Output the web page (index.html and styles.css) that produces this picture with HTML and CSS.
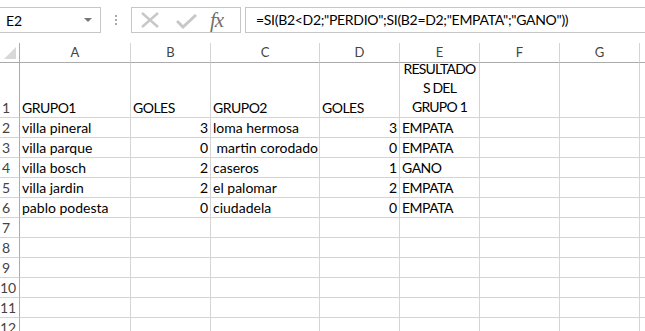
FILE: index.html
```html
<!DOCTYPE html>
<html>
<head>
    <meta charset="UTF-8">
    <title>Libro1</title>
    <link rel="stylesheet" href="styles.css">
</head>
<body>
    <div class="toolbar">
        <div class="namebox">
            <span>E2</span>
            <span class="arrow"></span>
        </div>
        <div class="grip"><i></i><i></i><i></i></div>
        <div class="buttons">
            <svg class="btn-x" width="18" height="16" viewBox="0 0 18 16"><path d="M1 1 L17 15 M17 1 L1 15" stroke="#c8c8c8" stroke-width="2.4" fill="none"/></svg>
            <svg class="btn-ok" width="21" height="15" viewBox="0 0 21 15"><path d="M1 7 L7 13 L20 1" stroke="#c8c8c8" stroke-width="3" fill="none"/></svg>
            <span class="fx">fx</span>
        </div>
        <div class="formula">=SI(B2&lt;D2;"PERDIO";SI(B2=D2;"EMPATA";"GANO"))</div>
    </div>
    <div class="sheet">
        <div class="ch corner"><span class="tri"></span></div>
        <div class="ch">A</div>
        <div class="ch">B</div>
        <div class="ch">C</div>
        <div class="ch">D</div>
        <div class="ch">E</div>
        <div class="ch">F</div>
        <div class="ch">G</div>
        <div class="ch last"></div>

        <div class="rh tall">1</div>
        <div class="c tall caps">GRUPO1</div>
        <div class="c tall caps">GOLES</div>
        <div class="c tall caps">GRUPO2</div>
        <div class="c tall caps">GOLES</div>
        <div class="c tall caps wrap">RESULTADO<br>S DEL<br>GRUPO 1</div>
        <div class="c tall"></div>
        <div class="c tall"></div>
        <div class="c tall last"></div>

        <div class="rh">2</div>
        <div class="c">villa pineral</div>
        <div class="c num">3</div>
        <div class="c">loma hermosa</div>
        <div class="c num">3</div>
        <div class="c caps">EMPATA</div>
        <div class="c"></div>
        <div class="c"></div>
        <div class="c last"></div>

        <div class="rh">3</div>
        <div class="c">villa parque</div>
        <div class="c num">0</div>
        <div class="c">&nbsp;martin corodado</div>
        <div class="c num">0</div>
        <div class="c caps">EMPATA</div>
        <div class="c"></div>
        <div class="c"></div>
        <div class="c last"></div>

        <div class="rh">4</div>
        <div class="c">villa bosch</div>
        <div class="c num">2</div>
        <div class="c">caseros</div>
        <div class="c num">1</div>
        <div class="c caps">GANO</div>
        <div class="c"></div>
        <div class="c"></div>
        <div class="c last"></div>

        <div class="rh">5</div>
        <div class="c">villa jardin</div>
        <div class="c num">2</div>
        <div class="c">el palomar</div>
        <div class="c num">2</div>
        <div class="c caps">EMPATA</div>
        <div class="c"></div>
        <div class="c"></div>
        <div class="c last"></div>

        <div class="rh">6</div>
        <div class="c">pablo podesta</div>
        <div class="c num">0</div>
        <div class="c">ciudadela</div>
        <div class="c num">0</div>
        <div class="c caps">EMPATA</div>
        <div class="c"></div>
        <div class="c"></div>
        <div class="c last"></div>

        <div class="rh">7</div><div class="c"></div><div class="c"></div><div class="c"></div><div class="c"></div><div class="c"></div><div class="c"></div><div class="c"></div><div class="c last"></div>
        <div class="rh">8</div><div class="c"></div><div class="c"></div><div class="c"></div><div class="c"></div><div class="c"></div><div class="c"></div><div class="c"></div><div class="c last"></div>
        <div class="rh">9</div><div class="c"></div><div class="c"></div><div class="c"></div><div class="c"></div><div class="c"></div><div class="c"></div><div class="c"></div><div class="c last"></div>
        <div class="rh">10</div><div class="c"></div><div class="c"></div><div class="c"></div><div class="c"></div><div class="c"></div><div class="c"></div><div class="c"></div><div class="c last"></div>
        <div class="rh">11</div><div class="c"></div><div class="c"></div><div class="c"></div><div class="c"></div><div class="c"></div><div class="c"></div><div class="c"></div><div class="c last"></div>
        <div class="rh">12</div><div class="c"></div><div class="c"></div><div class="c"></div><div class="c"></div><div class="c"></div><div class="c"></div><div class="c"></div><div class="c last"></div>
    </div>
</body>
</html>
```

FILE: styles.css
```css
html{
    overflow:hidden;
}
body{
    margin:0;
    background:#fff;
    font-family:Lato, "Liberation Sans", sans-serif;
    font-size:14px;
    color:#000;
}
.toolbar{
    height:43px;
    box-sizing:border-box;
    padding-top:7px;
    display:flex;
    align-items:flex-start;
}
.namebox{
    width:101px;
    height:26px;
    box-sizing:border-box;
    border:1px solid #c6c6c6;
    border-left:none;
    display:flex;
    align-items:center;
    justify-content:space-between;
    padding:0 8px 0 6px;
    font-size:14px;
}
.arrow{
    width:0;
    height:0;
    border-left:4px solid transparent;
    border-right:4px solid transparent;
    border-top:4px solid #777;
}
.grip{
    width:30px;
    height:26px;
    display:flex;
    flex-direction:column;
    align-items:center;
    justify-content:center;
    gap:2px;
}
.grip i{
    width:2px;
    height:2px;
    background:#a8a8a8;
}
.buttons{
    width:110px;
    height:26px;
    box-sizing:border-box;
    border:1px solid #c6c6c6;
    display:flex;
    align-items:center;
    padding-left:9px;
}
.btn-x{
    margin-right:17px;
}
.btn-ok{
    margin-right:13px;
    margin-top:2px;
}
.fx{
    font-family:"Liberation Serif", serif;
    font-style:italic;
    font-size:21px;
    color:#707070;
    letter-spacing:-1px;
}
.formula{
    flex:1;
    margin-left:4px;
    margin-right:-2px;
    height:26px;
    box-sizing:border-box;
    border:1px solid #c6c6c6;
    padding-left:10px;
    line-height:23px;
    letter-spacing:-0.3px;
    white-space:nowrap;
}
.sheet{
    display:grid;
    grid-template-columns:20px 111px 80px 109px 80px 80px 80px 80px 1fr;
    grid-template-rows:20px 55px repeat(11, 20px);
}
.sheet > div{
    box-sizing:border-box;
    border-right:1px solid #d4d4d4;
    border-bottom:1px solid #d4d4d4;
    white-space:nowrap;
    overflow:hidden;
}
.sheet > .last{
    border-right:none;
}
.ch{
    text-align:center;
    line-height:19px;
    color:#444;
    font-size:13px;
    border-bottom-color:#ababab !important;
}
.corner{
    position:relative;
    border-right-color:#ababab !important;
}
.tri{
    position:absolute;
    right:3px;
    bottom:3px;
    width:0;
    height:0;
    border-left:12px solid transparent;
    border-bottom:12px solid #d8d8d8;
}
.rh{
    color:#444;
    text-align:center;
    padding-right:7px;
    line-height:19px;
    border-right-color:#ababab !important;
}
.sheet > .tall{
    display:flex;
    align-items:flex-end;
}
.rh.tall{
    justify-content:center;
}
.c{
    padding:0 2px;
    line-height:19px;
}
.caps{
    letter-spacing:-0.5px;
}
.num{
    text-align:right;
    padding-right:2px;
}
.sheet > .wrap{
    line-height:19px;
    padding:0 0 1px;
    letter-spacing:-0.8px;
    text-align:center;
    justify-content:center;
}
```
